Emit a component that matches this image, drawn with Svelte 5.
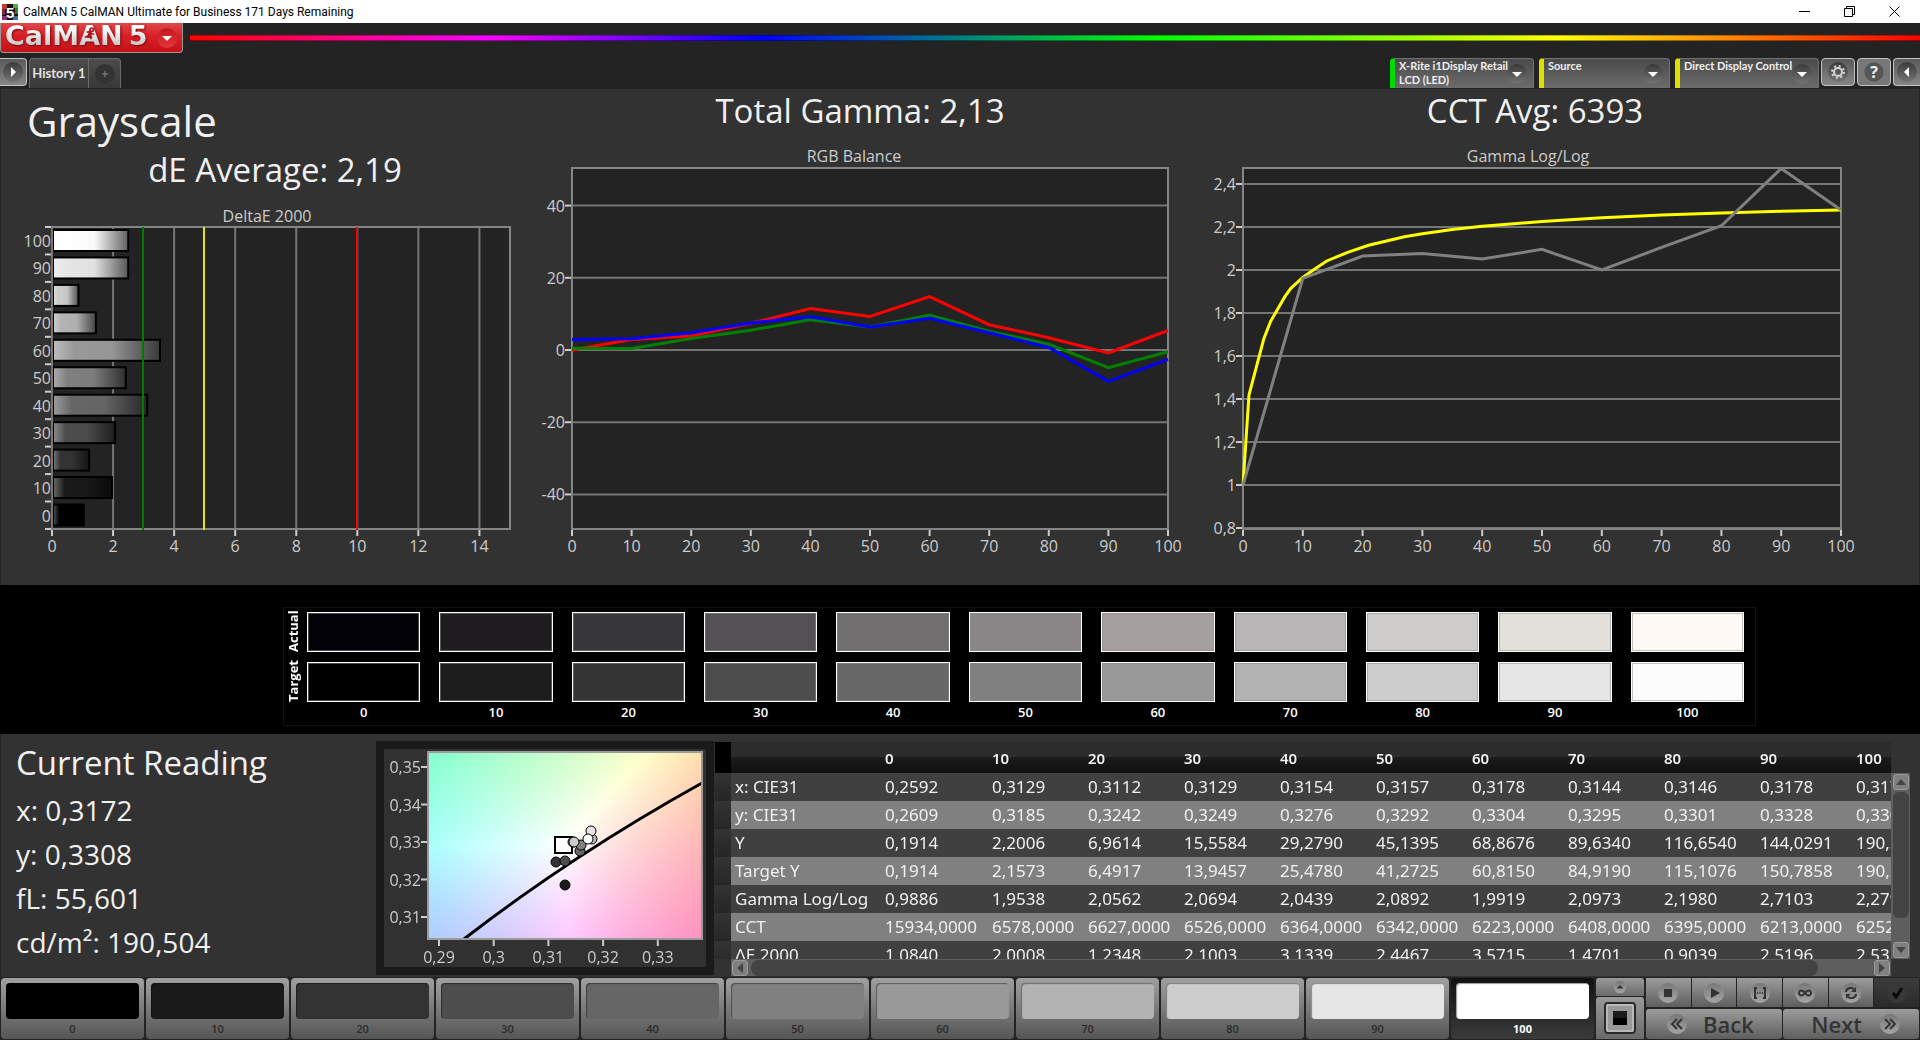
<script>
  const levels = [0, 10, 20, 30, 40, 50, 60, 70, 80, 90, 100];
  const actual = ['#020208', '#1f1c1f', '#373739', '#545154', '#706e6f', '#8a8687', '#a5a09f', '#b8b6b7', '#cecdcb', '#e4e1dd', '#fff9f6'];
  const target = ['#000000', '#1d1d1d', '#353535', '#4d4d4d', '#676767', '#808080', '#999999', '#b3b3b3', '#cdcdcd', '#e6e6e6', '#fcfcfc'];
  const patches = ['#000000', '#1a1a1a', '#333333', '#4d4d4d', '#666666', '#808080', '#999999', '#b3b3b3', '#cdcdcd', '#e6e6e6', '#ffffff'];

  const rows = [
    ['x: CIE31', '0,2592', '0,3129', '0,3112', '0,3129', '0,3154', '0,3157', '0,3178', '0,3144', '0,3146', '0,3178', '0,3172'],
    ['y: CIE31', '0,2609', '0,3185', '0,3242', '0,3249', '0,3276', '0,3292', '0,3304', '0,3295', '0,3301', '0,3328', '0,3308'],
    ['Y', '0,1914', '2,2006', '6,9614', '15,5584', '29,2790', '45,1395', '68,8676', '89,6340', '116,6540', '144,0291', '190,5040'],
    ['Target Y', '0,1914', '2,1573', '6,4917', '13,9457', '25,4780', '41,2725', '60,8150', '84,9190', '115,1076', '150,7858', '190,5040'],
    ['Gamma Log/Log', '0,9886', '1,9538', '2,0562', '2,0694', '2,0439', '2,0892', '1,9919', '2,0973', '2,1980', '2,7103', '2,2792'],
    ['CCT', '15934,0000', '6578,0000', '6627,0000', '6526,0000', '6364,0000', '6342,0000', '6223,0000', '6408,0000', '6395,0000', '6213,0000', '6252,0000'],
    ['ΔE 2000', '1,0840', '2,0008', '1,2348', '2,1003', '3,1339', '2,4467', '3,5715', '1,4701', '0,9039', '2,5196', '2,5321']
  ];

  // DeltaE bars, one per gray level
  const deltaE = [1.08, 2.0, 1.25, 2.1, 3.15, 2.45, 3.57, 1.47, 0.9, 2.53, 2.53];
  const deX = (v) => 52 + v * 30.53;
  const deY = (i) => 37 + (10 - i) * 27.45;
  const shade = (level, amount) => {
    const base = level * 2.55;
    const v = amount >= 0 ? base + (255 - base) * amount : base * (1 + amount);
    const n = Math.round(v);
    return `rgb(${n},${n},${n})`;
  };

  const red = [0, 2.9, 3.9, 7.4, 11.5, 9.3, 14.8, 7, 3.4, -0.8, 5.4];
  const green = [0.5, 0.4, 3.2, 5.5, 8.4, 6.4, 9.7, 5.2, 1.6, -4.9, -0.5];
  const blue = [2.9, 3.1, 4.8, 7.5, 9.2, 6.4, 8.8, 4.8, 0.7, -8.7, -2.6];
  const rgbX = (v) => 42 + v * 5.96;
  const rgbY = (v) => 219 - v * 3.61;
  const rgbLine = (values) => values.map((v, i) => `${rgbX(i * 10)},${rgbY(v)}`).join(' ');

  const gammaX = (v) => 53 + v * 5.98;
  const gammaY = (v) => 354 - (v - 1) * 215;
  const measured = [[0, 1], [10, 1.961], [20, 2.065], [30, 2.077], [40, 2.051], [50, 2.096], [60, 2], [70, 2.105], [80, 2.206], [90, 2.472], [100, 2.279]];
  const ideal = [[0, 1], [1, 1.419], [3.5, 1.682], [4.6, 1.76], [7, 1.876], [8, 1.915], [10, 1.966], [12, 2.005], [14, 2.042], [17.5, 2.082], [21, 2.115], [27, 2.155], [30, 2.169], [35, 2.188], [40, 2.203], [50, 2.226], [60, 2.243], [70, 2.256], [80, 2.265], [90, 2.273], [100, 2.279]];
  const gammaLine = (pts) => pts.map(([a, b]) => `${gammaX(a)},${gammaY(b)}`).join(' ');

  // Chromaticity dots: x, y, fill
  const dots = [
    [181, 136, '#1a1a1a'], [172, 113, '#333333'], [181, 112, '#4d4d4d'], [196, 102, '#666666'], [197, 96, '#808080'],
    [208, 90, '#b8b8b8'], [189, 93, '#b3b3b3'], [190, 93, '#cccccc'], [207, 82, '#e6e6e6'], [204, 90, '#ffffff']
  ];

  // Fills the plot with the linear RGB colour of each xy chromaticity
  function paintChromaticity(canvas) {
    const ctx = canvas.getContext('2d');
    const { width, height } = canvas;
    const img = ctx.createImageData(width, height);
    for (let j = 0; j < height; j++) {
      for (let i = 0; i < width; i++) {
        const x = 0.288 + (i / width) * 0.05;
        const y = 0.354 - (j / height) * 0.05;
        const X = x / y;
        const Z = (1 - x - y) / y;
        const r = 3.2406 * X - 1.5372 - 0.4986 * Z;
        const g = -0.9689 * X + 1.8758 + 0.0415 * Z;
        const b = 0.0557 * X - 0.204 + 1.057 * Z;
        const m = Math.max(r, g, b);
        const k = (j * width + i) * 4;
        img.data[k] = (r / m) * 255;
        img.data[k + 1] = (g / m) * 255;
        img.data[k + 2] = (b / m) * 255;
        img.data[k + 3] = 255;
      }
    }
    ctx.putImageData(img, 0, 0);
  }
</script>

{#snippet down()}
  <svg class="disc" viewBox="0 0 20 20" aria-hidden="true"><circle cx="10" cy="10" r="10" fill="url(#discDark)" /><path d="M5 8h10l-5 5z" fill="#fff" /></svg>
{/snippet}

<div class="app">
  <svg class="defs" aria-hidden="true">
    <defs>
      <linearGradient id="discDark" x2="0" y2="1"><stop offset="0" stop-color="#3a3a3a" /><stop offset="1" stop-color="#747474" /></linearGradient>
      <linearGradient id="discLight" x2="0" y2="1"><stop offset="0" stop-color="#777" /><stop offset="1" stop-color="#a6a6a6" /></linearGradient>
      <linearGradient id="discRed" x2="0" y2="1"><stop offset="0" stop-color="#c01820" /><stop offset="1" stop-color="#e8343a" /></linearGradient>
    </defs>
  </svg>

  <header class="titlebar">
    <svg class="appicon" viewBox="0 0 16 16" aria-hidden="true">
      <rect width="16" height="16" fill="#181010" />
      <path d="M0 0h5v5H0z" fill="#c23a2c" /><path d="M0 5h3v6H0z" fill="#8c2040" /><path d="M11 0h5v4h-5z" fill="#58a848" />
      <path d="M13 4h3v6h-3z" fill="#2d7a50" /><path d="M0 12h5v4H0z" fill="#8a3478" /><path d="M11 12h5v4h-5z" fill="#3b6ea8" />
      <text x="4" y="14" class="five">5</text>
    </svg>
    <span class="caption">CalMAN 5 CalMAN Ultimate for Business 171 Days Remaining</span>
    <button class="win" aria-label="Minimize"><svg viewBox="0 0 11 11"><path d="M0 5.5h11" /></svg></button>
    <button class="win" aria-label="Restore"><svg viewBox="0 0 11 11"><path d="M.5 2.5h8v8h-8zM2.5 2.5v-2h8v8h-2" /></svg></button>
    <button class="win" aria-label="Close"><svg viewBox="0 0 11 11"><path d="M.5.5l10 10M10.5.5l-10 10" /></svg></button>
  </header>

  <div class="brandrow">
    <button class="logo">
      <span class="word">CalMAN</span><span class="word">5</span>
      <svg class="disc" viewBox="0 0 20 20" aria-hidden="true"><circle cx="10" cy="10" r="10" fill="url(#discRed)" /><path d="M5 8h10l-5 5z" fill="#fff" /></svg>
      <svg class="runner" viewBox="0 0 14 14" aria-hidden="true"><circle cx="9" cy="2" r="2" /><path d="M3 5l4-1 2 3 3 0M7 5L5 9l3 1 0 3M5 9l-4 2" /></svg>
    </button>
    <div class="rainbow"></div>
  </div>

  <div class="toolbar">
    <button class="square first" aria-label="Expand"><svg class="disc" viewBox="0 0 20 20"><circle cx="10" cy="10" r="10" fill="url(#discDark)" /><path d="M8 5v10l5-5z" fill="#fff" /></svg></button>
    <nav class="tabs">
      <button class="tab">History 1</button>
      <button class="tab plus" aria-label="Add tab"><svg class="disc" viewBox="0 0 20 20"><circle cx="10" cy="10" r="10" fill="#333" /><path d="M10 7v6M7 10h6" stroke="#8a8a8a" /></svg></button>
    </nav>
    <div class="spacer"></div>
    <div class="devices">
      <button class="device green"><span>X-Rite i1Display Retail<br />LCD (LED)</span>{@render down()}</button>
      <button class="device mid"><span>Source</span>{@render down()}</button>
      <button class="device"><span>Direct Display Control</span>{@render down()}</button>
    </div>
    <button class="square" aria-label="Settings">
      <svg class="disc" viewBox="0 0 20 20"><circle cx="10" cy="10" r="10" fill="url(#discDark)" /><circle cx="10" cy="10" r="4" fill="none" stroke="#d6d6d6" stroke-width="2" /><circle cx="10" cy="10" r="6" fill="none" stroke="#d6d6d6" stroke-width="2" stroke-dasharray="2 2.71" /></svg>
    </button>
    <button class="square help" aria-label="Help">?</button>
    <button class="square last" aria-label="Collapse"><svg class="disc" viewBox="0 0 20 20"><circle cx="10" cy="10" r="10" fill="url(#discDark)" /><path d="M12 5v10l-5-5z" fill="#fff" /></svg></button>
  </div>

  <main class="charts">
    <section>
      <h1>Grayscale</h1>
      <h2 class="de">dE Average: 2,19</h2>
      <svg class="chart" viewBox="0 0 530 393" role="img" aria-label="DeltaE 2000">
        <defs>
          {#each levels as level}
            <linearGradient id="bar{level}">
              <stop offset="0" stop-color={shade(level, 0.35)} />
              <stop offset="0.2" stop-color={shade(level, 0)} />
              <stop offset="0.55" stop-color={shade(level, -0.02)} />
              <stop offset="1" stop-color={shade(level, -0.62)} />
            </linearGradient>
          {/each}
        </defs>
        <text x="267" y="32" text-anchor="middle">DeltaE 2000</text>
        <rect x="52" y="37" width="458" height="302" fill="#232323" />
        {#each [2, 4, 6, 8, 10, 12, 14] as v}
          <path class="grid" d="M{deX(v)} 37V339" />
        {/each}
        <rect x="52" y="37" width="458" height="302" class="frame" />
        {#each [0, 2, 4, 6, 8, 10, 12, 14] as v}
          <path class="tick" d="M{deX(v)} 340v6" />
          <text x={deX(v)} y="362" text-anchor="middle">{v}</text>
        {/each}
        {#each Array(12) as _, i}
          <path class="tick" d="M45 {37 + i * 27.45}h6" />
        {/each}
        {#each levels as level, i}
          <rect x="53" y={deY(i) + 3} width={deltaE[i] * 30.53 - 2} height="21" fill="url(#bar{level})" stroke="#000" stroke-width="2" />
          <text x="51" y={deY(i) + 20} text-anchor="end">{level}</text>
        {/each}
        <path class="grid" d="M52 37V339" />
        <path d="M143 37V340" stroke="#007a00" stroke-width="2" />
        <path d="M204 37V340" stroke="#e6e600" stroke-width="2" />
        <path d="M357 37V340" stroke="#f00808" stroke-width="2" />
      </svg>
    </section>

    <section>
      <h2>Total Gamma: 2,13</h2>
      <svg class="chart" viewBox="0 0 660 454" role="img" aria-label="RGB Balance">
        <text x="324" y="31" text-anchor="middle">RGB Balance</text>
        <rect x="42" y="37" width="596" height="361" fill="#232323" />
        {#each [40, 20, 0, -20, -40] as v}
          <path class="grid" d="M42 {rgbY(v)}H638" />
          <path class="tick" d="M35 {rgbY(v)}h6" />
          <text x="35" y={rgbY(v) + 6} text-anchor="end">{v}</text>
        {/each}
        <rect x="42" y="37" width="596" height="361" class="frame" />
        {#each levels as v}
          <path class="tick" d="M{rgbX(v)} 399v6" />
          <text x={rgbX(v)} y="421" text-anchor="middle">{v}</text>
        {/each}
        <polyline class="series" points={rgbLine(red)} stroke="#ff0000" />
        <polyline class="series" points={rgbLine(green)} stroke="#008000" />
        <polyline class="series" points={rgbLine(blue)} stroke="#0000ff" />
      </svg>
    </section>

    <section>
      <h2 class="cct">CCT Avg: 6393</h2>
      <svg class="chart" viewBox="0 0 730 454" role="img" aria-label="Gamma Log/Log">
        <text x="338" y="31" text-anchor="middle">Gamma Log/Log</text>
        <rect x="53" y="37" width="598" height="361" fill="#232323" />
        {#each [2.4, 2.2, 2, 1.8, 1.6, 1.4, 1.2, 1, 0.8] as v}
          <path class="grid" d="M53 {gammaY(v)}H651" />
          <path class="tick" d="M46 {gammaY(v)}h6" />
          <text x="46" y={gammaY(v) + 6} text-anchor="end">{String(v).replace('.', ',')}</text>
        {/each}
        <rect x="53" y="37" width="598" height="361" class="frame" />
        {#each levels as v}
          <path class="tick" d="M{gammaX(v)} 399v6" />
          <text x={gammaX(v)} y="421" text-anchor="middle">{v}</text>
        {/each}
        <polyline class="series" points={gammaLine(ideal)} stroke="#ffff00" />
        <polyline class="series" points={gammaLine(measured)} stroke="#808080" />
      </svg>
    </section>
  </main>

  <section class="compare">
    <div class="box">
      <span class="side">Actual</span>
      {#each actual as c}<div class="swatch" style="background:{c}"></div>{/each}
      <span class="side">Target</span>
      {#each target as c}<div class="swatch" style="background:{c}"></div>{/each}
      <span></span>
      {#each levels as l}<span class="lvl">{l}</span>{/each}
    </div>
  </section>

  <section class="lower">
    <div class="reading">
      <h2>Current Reading</h2>
      <p>x: 0,3172</p>
      <p>y: 0,3308</p>
      <p>fL: 55,601</p>
      <p>cd/m²: 190,504</p>
    </div>

    <div class="cie">
      <svg viewBox="0 0 322 218" role="img" aria-label="CIE chart">
        <foreignObject x="44" y="3" width="274" height="187"><canvas width="274" height="187" use:paintChromaticity></canvas></foreignObject>
        <path d="M80 190Q190 105 318 34" fill="none" stroke="#000" stroke-width="3" />
        <rect x="44" y="3" width="274" height="187" fill="none" stroke="#9a9a9a" stroke-width="2" />
        <rect x="171" y="88" width="17" height="16" fill="#fff" stroke="#000" stroke-width="2" />
        {#each dots as [x, y, fill]}
          <circle cx={x} cy={y} r="5" {fill} stroke="#000" />
        {/each}
        {#each ['0,35', '0,34', '0,33', '0,32', '0,31'] as t, i}
          <path class="tick" d="M37 {18 + i * 37.5}h6" />
          <text x="37" y={24 + i * 37.5} text-anchor="end">{t}</text>
        {/each}
        {#each ['0,29', '0,3', '0,31', '0,32', '0,33'] as t, i}
          <path class="tick" d="M{55 + i * 54.7} 191v6" />
          <text x={55 + i * 54.7} y="214" text-anchor="middle">{t}</text>
        {/each}
      </svg>
    </div>

    <div class="data">
      <div class="clip">
        <table>
          <thead>
            <tr><th class="sel"></th><th class="name"></th>{#each levels as l, i}<th class:wide={i === 0}>{l}</th>{/each}</tr>
          </thead>
          <tbody>
            {#each rows as row}
              <tr><td class="sel"></td>{#each row as cell}<td>{cell}</td>{/each}</tr>
            {/each}
          </tbody>
        </table>
      </div>
      <div class="vbar">
        <button aria-label="Scroll up"><svg viewBox="0 0 10 10"><path d="M0 8h10L5 2z" /></svg></button>
        <div class="thumb"></div>
        <button aria-label="Scroll down"><svg viewBox="0 0 10 10"><path d="M0 2h10L5 8z" /></svg></button>
      </div>
      <div class="hbar">
        <button aria-label="Scroll left"><svg viewBox="0 0 10 10"><path d="M8 0v10L2 5z" /></svg></button>
        <div class="thumb"></div>
        <button aria-label="Scroll right"><svg viewBox="0 0 10 10"><path d="M2 0v10l6-5z" /></svg></button>
      </div>
    </div>
  </section>

  <footer class="bar">
    {#each patches as c, i}
      <button class="patch" class:active={i === 10}><span class="chip" style="background:{c}"></span><span class="num">{levels[i]}</span></button>
    {/each}
    <div class="stack">
      <button class="up" aria-label="Show patterns"><svg viewBox="0 0 20 20"><circle cx="10" cy="10" r="9" fill="url(#discLight)" /><path d="M5 12h10l-5-5z" fill="#333" /></svg></button>
      <button class="pattern" aria-label="Pattern window"><svg viewBox="0 0 32 32"><rect x="1" y="1" width="30" height="30" rx="3" fill="#999" stroke="#2a2a2a" stroke-width="2" /><rect x="3" y="3" width="26" height="26" rx="1" fill="none" stroke="#b8b8b8" stroke-width="2" /><path d="M9 9h14v14H9z" fill="#000" /><path d="M9 9h14v7H9z" fill="#1c1c1c" /></svg></button>
    </div>
    <div class="controls">
      <button aria-label="Stop"><svg viewBox="0 0 20 20"><circle cx="10" cy="10" r="10" fill="url(#discLight)" /><path d="M6 6h8v8H6z" fill="#333" /></svg></button>
      <button aria-label="Play"><svg viewBox="0 0 20 20"><circle cx="10" cy="10" r="10" fill="url(#discLight)" /><path d="M7 5v10l9-5z" fill="#333" /></svg></button>
      <button aria-label="Read series"><svg viewBox="0 0 20 20"><circle cx="10" cy="10" r="10" fill="url(#discLight)" /><path d="M7 5H5v10h2M13 5h2v10h-2" fill="none" stroke="#333" stroke-width="2" /><path d="M7 9h1v2H7zM9.500 9h1v2h-1zM12 9h1v2h-1z" fill="#333" /></svg></button>
      <button aria-label="Read continuously"><svg viewBox="0 0 20 20"><circle cx="10" cy="10" r="10" fill="url(#discLight)" /><path d="M10 10C8 7 4 6.500 4 10s4 3 6 0 6-3.500 6 0-4 3-6 0z" fill="none" stroke="#333" stroke-width="2" /></svg></button>
      <button aria-label="Refresh"><svg viewBox="0 0 20 20"><circle cx="10" cy="10" r="10" fill="url(#discLight)" /><path d="M5 9c0-4 5-5 8-3M15 11c0 4-5 5-8 3" fill="none" stroke="#333" stroke-width="2" /><path d="M15 4v5h-5zM5 16v-5h5z" fill="#333" /></svg></button>
      <button class="dark" aria-label="Done"><svg viewBox="0 0 20 20"><circle cx="10" cy="10" r="10" fill="#383838" /><path d="M6 10l3 4 6-9" fill="none" stroke="#0a0a0a" stroke-width="3" /></svg></button>
      <button class="nav"><svg viewBox="0 0 20 20"><circle cx="10" cy="10" r="10" fill="url(#discLight)" /><path d="M10 5l-5 5 5 5M15 5l-5 5 5 5" fill="none" stroke="#333" stroke-width="2" /></svg><span>Back</span></button>
      <button class="nav next"><span>Next</span><svg viewBox="0 0 20 20"><circle cx="10" cy="10" r="10" fill="url(#discLight)" /><path d="M5 5l5 5-5 5M10 5l5 5-5 5" fill="none" stroke="#333" stroke-width="2" /></svg></button>
    </div>
  </footer>
</div>

<style>
  :global(body) { margin: 0; background: #232323; }
  .app { font-family: "Open Sans", "Noto Sans", sans-serif; color: #f0f0f0; background: #232323; overflow: hidden; }
  .app * { box-sizing: border-box; }
  button { font: inherit; color: inherit; border: 0; padding: 0; margin: 0; background: none; }
  svg { display: block; }
  .defs { position: absolute; width: 0; height: 0; }
  .disc { width: 20px; height: 20px; flex: none; }

  .titlebar { display: flex; align-items: center; height: 23px; background: #fff; color: #000; font-size: 12px; padding-left: 2px; }
  .appicon { width: 16px; height: 16px; margin-right: 5px; }
  .five { font: 700 15px "Liberation Sans", sans-serif; fill: #fff; }
  .caption { flex: 1; font-family: Roboto, sans-serif; line-height: 20px; }
  .win { width: 45px; height: 20px; display: grid; place-items: center; }
  .win:last-child { margin-right: 3px; }
  .win svg { width: 11px; height: 11px; fill: none; stroke: #000; }

  .brandrow { display: flex; align-items: flex-start; gap: 7px; height: 35px; }
  .logo { position: relative; display: flex; align-items: center; width: 183px; height: 30px; padding-left: 4px; gap: 6px; background: linear-gradient(#e04848, #d81f26 45%, #c41218); border: 1px solid #999; border-top: 0; border-radius: 0 0 4px 4px; }
  .word { font: 700 27px/28px "DejaVu Sans", sans-serif; background: linear-gradient(#fff 20%, #b8b8b8); background-clip: text; color: transparent; filter: drop-shadow(1px 1px 1px #7a0a0e); margin-top: -4px; }
  .logo .disc { margin-left: 4px; }
  .runner { position: absolute; left: 83px; top: 4px; width: 12px; height: 14px; stroke: #b3141b; stroke-width: 2; fill: none; }
  .rainbow { flex: 1; height: 6px; margin-top: 12px; background: linear-gradient(90deg, #f00, #f0f 17%, #00f 33%, #0f0 56%, #ff0 79%, #f00); border-bottom: 1px solid #0006; border-top: 1px solid #0004; }

  .toolbar { display: flex; align-items: flex-start; height: 31px; }
  .square { width: 34px; height: 28px; display: grid; place-items: center; background: linear-gradient(#5a5a5a, #868686); border: 1px solid #c4c4c4; border-radius: 4px; margin-left: 2px; }
  .square.first { width: 27px; margin: 0; border-left: 0; border-radius: 0 4px 4px 0; }
  .square.last { width: 27px; border-right: 0; border-radius: 4px 0 0 4px; }
  .square.help { font-weight: 700; font-size: 16px; line-height: 20px; background: radial-gradient(circle, #555 9px, #777 10px); }
  .tabs { display: flex; margin-left: 2px; height: 30px; border: 1px solid #6a6a6a; border-bottom: 0; border-radius: 4px 4px 0 0; background: linear-gradient(#4c4c4c, #383838); }
  .tab { width: 58px; font: 700 13px/29px Lato, sans-serif; color: #e2e2e2; white-space: nowrap; }
  .plus { width: 32px; border-left: 1px solid #6a6a6a; display: grid; place-items: center; }
  .spacer { flex: 1; }
  .devices { display: flex; gap: 5px; }
  .device { display: flex; align-items: center; justify-content: space-between; width: 144px; height: 30px; padding: 0 6px 0 4px; border: solid #727272; border-width: 1px 1px 0 0; border-left: 5px solid #e0e000; border-radius: 4px 4px 0 0; background: linear-gradient(#4a4a4a, #6c6c6c); }
  .device.green { border-left-color: #00dc00; }
  .device.mid { width: 131px; }
  .device span { align-self: flex-start; text-align: left; white-space: nowrap; margin-right: -20px; font: 700 11px/14px Lato, sans-serif; color: #eee; }

  h1, h2, p { margin: 0; font-weight: 400; }
  .charts { display: grid; grid-template-columns: 530fr 660fr 730fr; background: #323232; box-shadow: inset 1px 0 #232323, inset -1px 0 #232323; }
  h1 { font-size: 42px; line-height: 48px; padding: 8px 0 0 27px; }
  h2 { font-size: 33px; line-height: 40px; padding-top: 2px; text-align: center; }
  h2.de { padding: 5px 0 0 20px; }
  h2.cct { padding-right: 40px; }
  .chart { width: 100%; height: auto; }
  text { font-size: 16px; fill: #ccc; }
  .grid { stroke: #757575; stroke-width: 2; }
  .frame { fill: none; stroke: #858585; stroke-width: 2; }
  .tick { stroke: #ccc; stroke-width: 2; }
  .series { fill: none; stroke-width: 3; }

  .compare { background: #000; padding: 22px 164px 8px 283px; height: 149px; }
  .box { display: grid; grid-template-columns: 4px repeat(11, 1fr); column-gap: 19px; row-gap: 10px; grid-template-rows: 40px 40px 16px; border: 1px solid #111; padding: 4px 11px 5px 0; height: 119px; }
  .swatch { border: 1px solid #fff; box-shadow: inset 0 0 0 1px #8888; }
  .side { writing-mode: vertical-rl; transform: rotate(180deg); font-size: 13px; font-weight: 700; line-height: 18px; width: 18px; text-align: center; justify-self: start; color: #fff; }
  .lvl { text-align: center; font-size: 13px; font-weight: 600; line-height: 16px; color: #fff; margin-top: -8px; }

  .lower { display: flex; background: #323232; height: 243px; box-shadow: inset 1px 0 #232323; }
  .reading { width: 376px; padding: 9px 0 0 16px; }
  .reading h2 { text-align: left; margin-bottom: 5px; padding: 0; }
  .reading p { font-size: 28px; line-height: 44px; }
  .cie { width: 338px; height: 234px; margin-top: 7px; border: 8px solid #1a1a1a; background: #313131; }
  canvas { display: block; }

  .data { flex: 1; min-width: 0; display: grid; grid-template-columns: minmax(0, 1fr) 19px; grid-template-rows: 217px 17px; margin: 8px 10px 0 1px; }
  .clip { overflow: hidden; }
  table { border-collapse: collapse; table-layout: fixed; width: 1233px; font-family: "Noto Sans", sans-serif; font-size: 17px; }
  th { width: 96px; height: 31px; padding: 0 0 0 4px; text-align: left; font-size: 15px; font-weight: 600; line-height: 20px; background: linear-gradient(#2c2c2c 50%, #1b1b1b 50%, #101010); }
  td { height: 28px; padding: 0 0 0 4px; line-height: 24px; white-space: nowrap; }
  th.sel { width: 16px; background: #000; }
  th.name { width: 150px; }
  th.wide { width: 107px; }
  tbody tr { background: #404040; }
  tbody tr:nth-child(even) { background: #808080; }
  td.sel { background: linear-gradient(#333, #262626); }
  .vbar { display: flex; flex-direction: column; align-items: center; justify-content: space-between; margin-top: 31px; padding: 1px 0; background: #5e5e5e; }
  .vbar .thumb { width: 16px; flex: 1; margin: 2px 0 24px; border-radius: 6px; background: #434343; }
  .hbar { display: flex; align-items: center; margin-left: 16px; padding: 0 1px; background: #5e5e5e; }
  .hbar .thumb { flex: 1; height: 16px; margin: 0 56px 0 3px; border-radius: 8px; background: #434343; }
  .data button { width: 16px; height: 16px; display: grid; place-items: center; border: 1px solid #999; border-radius: 3px; background: #808080; }
  .data button svg { width: 10px; height: 10px; fill: #444; }

  .bar { display: grid; grid-template-columns: repeat(11, minmax(0, 1fr)) 48px 273px; column-gap: 2px; padding: 1px; height: 63px; background: #232323; }
  .patch { display: flex; flex-direction: column; padding: 5px 5px 0; border-radius: 4px; background: linear-gradient(#a0a0a0, #555); color: #2a2a2a; }
  .chip { height: 36px; border-radius: 4px; box-shadow: inset 1px 1px 1px #0006; }
  .num { font-size: 11px; font-weight: 600; line-height: 20px; text-align: center; }
  .active { background: linear-gradient(#111, #3a3a3a); color: #fff; }
  .active .num { font-weight: 700; }
  .stack { display: grid; grid-template-rows: 18px 1fr; gap: 1px; }
  .stack button { display: grid; place-items: center; background: linear-gradient(#999, #6a6a6a); border-radius: 3px 3px 0 0; }
  .up svg { width: 14px; height: 14px; }
  .pattern svg { width: 32px; height: 32px; }
  .controls { display: grid; grid-template-columns: repeat(6, 1fr); grid-template-rows: 29px 30px; gap: 2px 1px; }
  .controls button { display: grid; place-items: center; background: linear-gradient(#9c9c9c, #5e5e5e); color: #333; }
  .controls svg { width: 20px; height: 20px; }
  .controls .dark { background: linear-gradient(#3c3c3c, #2a2a2a); }
  .controls .nav { grid-column: span 3; display: flex; align-items: center; justify-content: flex-start; gap: 16px; padding-left: 21px; font-size: 22px; font-weight: 600; line-height: 28px; border-radius: 3px; }
  .controls .next { justify-content: flex-end; padding: 0 19px 0 0; gap: 18px; }
</style>
